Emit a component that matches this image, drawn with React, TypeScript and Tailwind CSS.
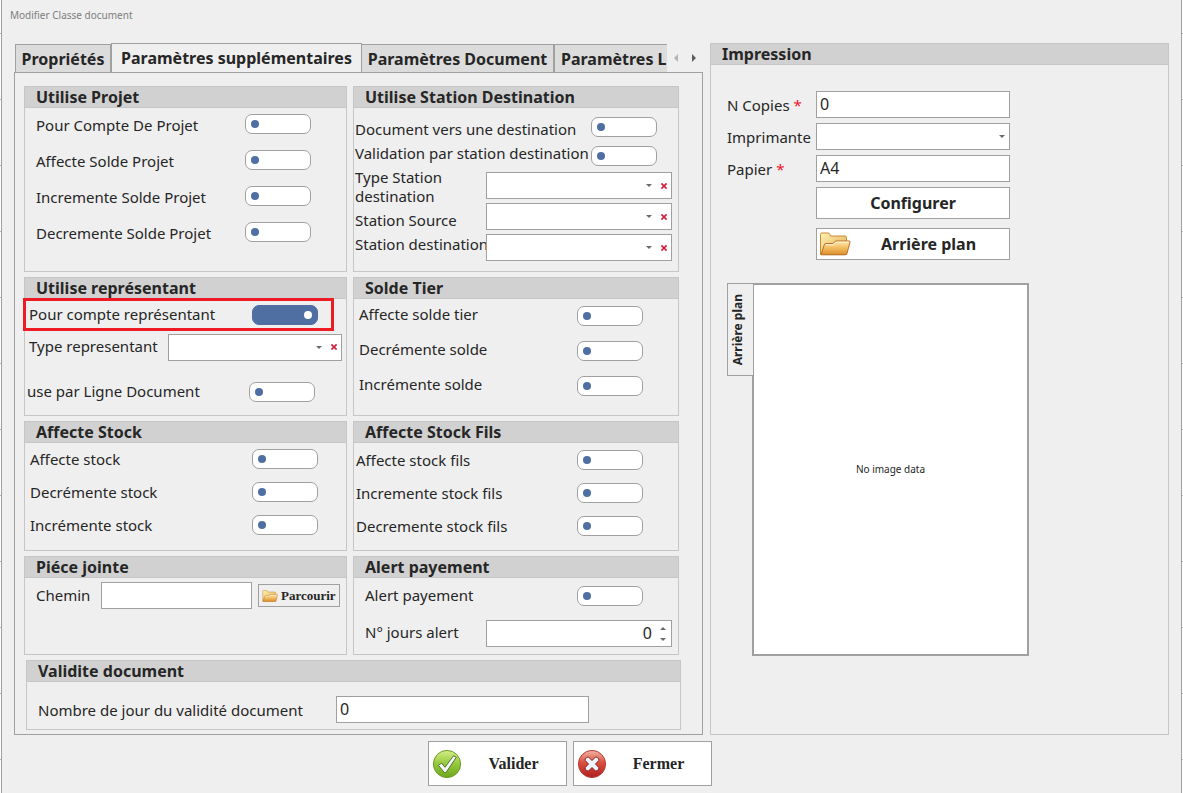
import React from "react";

const cx = (...parts: (string | undefined | false)[]) => parts.filter(Boolean).join(" ");

function Toggle({ id, on }: { id: string; on?: boolean }) {
  return (
    <input
      id={id}
      type="checkbox"
      role="switch"
      defaultChecked={on}
      className="flex h-5 w-[66px] shrink-0 appearance-none items-center rounded-[7px] border border-[#a0a0a0] bg-white px-[5px] before:block before:h-2 before:w-2 before:rounded-full before:bg-[#4f6fa3] checked:justify-end checked:border-[#4f6fa3] checked:bg-[#4f6fa3] checked:before:bg-white"
    />
  );
}

function Caret({ up }: { up?: boolean }) {
  return (
    <svg viewBox="0 0 6 3" className="block h-[3px] w-1.5 shrink-0" fill="#6a6a6a" aria-hidden="true">
      <path d={up ? "M0 3 3 0 6 3Z" : "M0 0H6L3 3Z"} />
    </svg>
  );
}

function Combo({ id, clearable = true, className }: { id: string; clearable?: boolean; className?: string }) {
  return (
    <div className={cx("flex h-[27px] items-center border border-[#a0a0a0] bg-white", className)}>
      <select id={id} defaultValue="" className="h-full min-w-0 flex-1 appearance-none bg-transparent px-1 outline-none">
        <option value=""></option>
      </select>
      <span className={clearable ? "mr-[9px]" : "mr-1"}>
        <Caret />
      </span>
      {clearable && (
        <button type="button" aria-label="Effacer" className="mr-1 block">
          <svg viewBox="0 0 6 6" className="block h-1.5 w-1.5" stroke="#d4213d" strokeWidth="1.7" aria-hidden="true">
            <path d="M.4.4 5.6 5.6M5.6.4.4 5.6" />
          </svg>
        </button>
      )}
    </div>
  );
}

function Group({ title, className, bodyClass, children }: { title: string; className?: string; bodyClass?: string; children: React.ReactNode }) {
  return (
    <section className={cx("relative flex flex-col border border-[#c6c6c6]", className)}>
      <h2 className="h-[21px] border-b border-[#c6c6c6] bg-[#d1d1d1] pl-[11px] text-base leading-5 font-bold">{title}</h2>
      <div className={bodyClass}>{children}</div>
    </section>
  );
}

function Row({ id, label, on, className, labelClass }: { id: string; label: string; on?: boolean; className: string; labelClass?: string }) {
  return (
    <div className={cx("flex items-center justify-between", className)}>
      <label htmlFor={id} className={cx("leading-5 whitespace-nowrap", labelClass)}>
        {label}
      </label>
      <Toggle id={id} on={on} />
    </div>
  );
}

function Folder({ className }: { className: string }) {
  return (
    <svg viewBox="0 0 32 24" className={className} aria-hidden="true">
      <defs>
        <linearGradient id="folder-back" x1="0" y1="0" x2="1" y2="1">
          <stop offset="0" stopColor="#fff3b4" />
          <stop offset="1" stopColor="#e0a64a" />
        </linearGradient>
        <linearGradient id="folder-front" x1="0" y1="0" x2="0" y2="1">
          <stop offset="0" stopColor="#fde9b0" />
          <stop offset=".5" stopColor="#f2bc62" />
          <stop offset="1" stopColor="#dd8f2c" />
        </linearGradient>
      </defs>
      <path d="M1.5 22.5V2.5Q1.5 1 3 1H9Q10.200 1 10.800 2.200L11.500 4H26Q27.500 4 27.500 5.500V22.500Z" fill="url(#folder-back)" stroke="#c98a35" />
      <path d="M2 22.800 5.200 13Q5.700 11.500 7.200 11.500H14L16.500 9H30.200Q31.300 9 31 10.200L28 21.300Q27.600 22.800 26 22.800Z" fill="url(#folder-front)" stroke="#b9702a" />
      <path d="M6.500 12.800H14.500L17 10.200H29.500" fill="none" stroke="#fff7d8" />
    </svg>
  );
}

function CheckIcon() {
  return (
    <svg viewBox="0 0 30 30" className="h-[30px] w-[30px] shrink-0" aria-hidden="true">
      <defs>
        <linearGradient id="ok" x1="0" y1="0" x2="0" y2="1">
          <stop offset="0" stopColor="#d4ee86" />
          <stop offset=".5" stopColor="#94c83c" />
          <stop offset="1" stopColor="#6fa51f" />
        </linearGradient>
      </defs>
      <circle cx="15" cy="15" r="13.600" fill="url(#ok)" stroke="#6c9b2a" />
      <path d="M6.500 16.500 9.500 14 13 18.300 21.500 6.800 24.300 8.300 14 23.500H12.300Z" fill="#f2f6fb" stroke="#54752a" strokeLinejoin="round" />
    </svg>
  );
}

function CloseIcon() {
  return (
    <svg viewBox="0 0 30 30" className="h-[30px] w-[30px] shrink-0" aria-hidden="true">
      <defs>
        <linearGradient id="ko" x1="0" y1="0" x2="0" y2="1">
          <stop offset="0" stopColor="#f0b6a4" />
          <stop offset=".45" stopColor="#d9503f" />
          <stop offset="1" stopColor="#b01f1c" />
        </linearGradient>
      </defs>
      <circle cx="15" cy="15" r="13.600" fill="url(#ko)" stroke="#b5403a" />
      <path
        d="M11.500 8 15 11.500 18.500 8 20 8.200 21.800 10 21.800 11.500 18.500 15 21.800 18.500 21.800 20 20 21.800 18.500 22 15 18.500 11.500 22 10 21.800 8.200 20 8.200 18.500 11.500 15 8.200 11.500 8.200 10 10 8.200Z"
        fill="#eef3fa"
        stroke="#8a1f1f"
        strokeLinejoin="round"
      />
    </svg>
  );
}

const fieldClass = "h-[27px] min-w-0 border border-[#a0a0a0] bg-white px-[3px] pb-px text-base leading-5 outline-none";
const tabClass = "h-[28px] shrink-0 border border-b-0 border-[#a0a0a0] bg-[#dcdcdc] text-base font-bold whitespace-nowrap";

function Edge() {
  return (
    <div className="flex w-px flex-col justify-around bg-white" aria-hidden="true">
      {Array.from({ length: 12 }, (_, i) => (
        <span key={i} className="h-px bg-[#b4b4b4]" />
      ))}
    </div>
  );
}

export default function App() {
  return (
    <div className="flex min-h-screen bg-white font-['Noto_Sans',sans-serif] text-[15px] text-[#262626]">
      <Edge />
      <main className="flex min-w-0 flex-1 flex-col border-x border-[#a0a0a0] bg-[#efefef] px-3">
        <h1 className="-ml-1 pt-[7px] text-[10px] leading-4 text-[#7d7d7d]">Modifier Classe document</h1>

        <div className="flex gap-[7px] pt-5">
          <div className="flex min-w-0 flex-[689] flex-col">
            <div role="tablist" className="flex items-end">
              <div className="flex min-w-0 flex-1 items-end overflow-hidden pl-px">
                <button type="button" role="tab" aria-selected="false" className={cx(tabClass, "w-24")}>Propriétés</button>
                <button type="button" role="tab" aria-selected="true" className="relative z-10 -mb-px h-[30px] w-[251px] shrink-0 border border-b-0 border-[#a0a0a0] bg-[#efefef] pb-px text-base font-bold whitespace-nowrap">
                  Paramètres supplémentaires
                </button>
                <button type="button" role="tab" aria-selected="false" className={cx(tabClass, "w-[192px] border-l-0")}>Paramètres Document</button>
                <button type="button" role="tab" aria-selected="false" className="h-[28px] min-w-0 flex-1 border border-r-0 border-b-0 border-[#a0a0a0] bg-[#dcdcdc] pl-1.5 text-left text-base font-bold whitespace-nowrap">Paramètres L</button>
              </div>
              <div className="flex h-[29px] w-9 shrink-0 items-center gap-3.5 pl-[7px]">
                <button type="button" aria-label="Onglets précédents">
                  <svg viewBox="0 0 4 8" className="block h-2 w-1" fill="#b4b4b4"><path d="M4 0V8L0 4Z" /></svg>
                </button>
                <button type="button" aria-label="Onglets suivants">
                  <svg viewBox="0 0 4 8" className="block h-2 w-1" fill="#5c5c5c"><path d="M0 0V8L4 4Z" /></svg>
                </button>
              </div>
            </div>

            <div className="grid flex-1 grid-cols-[minmax(0,323fr)_minmax(0,326fr)] content-start gap-x-1.5 gap-y-[5px] border border-[#a0a0a0] pt-[13px] pr-[23px] pb-1 pl-[9px]">
              <Group title="Utilise Projet" className="min-h-[186px]">
                {[
                  ["p1", "Pour Compte De Projet"],
                  ["p2", "Affecte Solde Projet"],
                  ["p3", "Incremente Solde Projet"],
                  ["p4", "Decremente Solde Projet"],
                ].map(([id, label]) => (
                  <Row key={id} id={id} label={label} className="h-9 pr-[35px] pb-1 pl-[11px]" labelClass="pt-0.5" />
                ))}
              </Group>

              <Group title="Utilise Station Destination" bodyClass="flex justify-between pr-1.5 pl-px">
                <div className="flex w-[131px] shrink-0 flex-col gap-[5px] pt-3 leading-[19px] whitespace-nowrap">
                  <label htmlFor="s1">Document vers une destination</label>
                  <label htmlFor="s2">Validation par station destination</label>
                  <label htmlFor="s3">Type Station<br />destination</label>
                  <label htmlFor="s4">Station Source</label>
                  <label htmlFor="s5">Station destination</label>
                </div>
                <div className="flex min-w-0 flex-1 flex-col gap-1 pt-[9px]">
                  <div className="flex flex-col items-end gap-[9px] pr-[15px] pb-0.5">
                    <Toggle id="s1" />
                    <Toggle id="s2" />
                  </div>
                  <Combo id="s3" />
                  <Combo id="s4" />
                  <Combo id="s5" />
                </div>
              </Group>

              <Group title="Utilise représentant" className="min-h-[139px]">
                <Row id="r1" label="Pour compte représentant" on className="h-8 pr-7 pl-1" labelClass="pb-0.5" />
                <div className="flex h-8 items-center justify-between pr-1 pl-1">
                  <label htmlFor="r2" className="pb-0.5 leading-5">Type representant</label>
                  <Combo id="r2" className="w-[174px]" />
                </div>
                <Row id="r3" label="use par Ligne Document" className="mt-[15px] h-7 pr-[31px] pl-0.5" labelClass="pb-0.5" />
                <div className="pointer-events-none absolute top-5 -left-0.5 h-[33px] w-[311px] border-3 border-[#ed1c24]" />
              </Group>

              <Group title="Solde Tier">
                {[
                  ["t1", "Affecte solde tier"],
                  ["t2", "Decrémente solde"],
                  ["t3", "Incrémente solde"],
                ].map(([id, label]) => (
                  <Row key={id} id={id} label={label} className="h-[35px] pr-[35px] pb-px pl-[5px]" labelClass="pb-1" />
                ))}
              </Group>

              <Group title="Affecte Stock" className="min-h-[130px]">
                {[
                  ["a1", "Affecte stock"],
                  ["a2", "Decrémente stock"],
                  ["a3", "Incrémente stock"],
                ].map(([id, label]) => (
                  <Row key={id} id={id} label={label} className="h-[33px] pr-7 pb-px pl-[5px]" />
                ))}
              </Group>

              <Group title="Affecte Stock Fils" bodyClass="pt-px">
                {[
                  ["f1", "Affecte stock fils"],
                  ["f2", "Incremente stock fils"],
                  ["f3", "Decremente stock fils"],
                ].map(([id, label]) => (
                  <Row key={id} id={id} label={label} className="h-[33px] pr-[35px] pb-px pl-0.5" />
                ))}
              </Group>

              <Group title="Piéce jointe" className="min-h-[99px]" bodyClass="flex items-center pt-1 pr-1.5 pl-[11px]">
                <label htmlFor="j1" className="w-[65px] shrink-0 pb-0.5 leading-5">Chemin</label>
                <input id="j1" type="text" className={cx(fieldClass, "flex-1")} />
                <button type="button" className="ml-1.5 flex h-[23px] w-[82px] items-center gap-[3px] border border-[#a0a0a0] pl-[3px] font-['Liberation_Serif',serif] text-[13px] leading-4 font-bold">
                  <Folder className="h-3 w-4 shrink-0" />
                  Parcourir
                </button>
              </Group>

              <Group title="Alert payement">
                <Row id="y1" label="Alert payement" className="h-9 pr-[35px] pl-[11px]" labelClass="pb-0.5" />
                <div className="flex items-center justify-between pt-1.5 pr-1.5 pl-[11px]">
                  <label htmlFor="y2" className="pb-1 leading-5 whitespace-nowrap">N° jours alert</label>
                  <div className="flex h-[27px] w-[186px] items-center border border-[#a0a0a0] bg-white pr-[5px]">
                    <input id="y2" type="text" inputMode="numeric" defaultValue="0" className="h-full min-w-0 flex-1 bg-transparent pr-2 pb-px text-right text-base outline-none" />
                    <span className="flex flex-col gap-2"><Caret up /><Caret /></span>
                  </div>
                </div>
              </Group>

              <Group title="Validite document" className="col-span-2 -mr-0.5 ml-0.5 min-h-[70px]" bodyClass="flex items-center pt-3.5 pl-[11px]">
                <label htmlFor="v1" className="w-[298px] shrink-0 leading-5">Nombre de jour du validité document</label>
                <input id="v1" type="text" defaultValue="0" className={cx(fieldClass, "w-[253px]")} />
              </Group>
            </div>
          </div>

          <Group title="Impression" className="min-w-0 flex-[457]" bodyClass="flex flex-col gap-[23px] pt-[26px] pl-4">
            <div className="grid grid-cols-[89px_194px] items-center gap-y-[5px]">
              <label htmlFor="i1" className="leading-5">N Copies <span className="text-[#f0142d]">*</span></label>
              <input id="i1" type="text" defaultValue="0" className={fieldClass} />
              <label htmlFor="i2" className="leading-5">Imprimante</label>
              <Combo id="i2" clearable={false} />
              <label htmlFor="i3" className="leading-5">Papier <span className="text-[#f0142d]">*</span></label>
              <input id="i3" type="text" defaultValue="A4" className={fieldClass} />
              <button type="button" className="col-start-2 h-8 border border-[#a0a0a0] bg-white text-base font-bold">Configurer</button>
              <button type="button" className="col-start-2 mt-1 flex h-8 items-center border border-[#a0a0a0] bg-white pr-[3px] pl-[2px] text-base font-bold">
                <Folder className="h-6 w-8 shrink-0" />
                <span className="flex-1">Arrière plan</span>
              </button>
            </div>
            <div className="flex items-start">
              <div role="tablist" className="relative z-10 -mr-px">
                <button type="button" role="tab" aria-selected="true" className="flex h-[93px] w-[26px] items-center justify-center border border-r-0 border-[#a0a0a0] bg-[#efefef] pr-1.5">
                  <span className="rotate-180 text-xs leading-5 font-bold whitespace-nowrap [writing-mode:vertical-rl]">Arrière plan</span>
                </button>
              </div>
              <div className="flex h-[373px] w-[277px] items-center justify-center border-2 border-[#a0a0a0] bg-white text-[10px]">No image data</div>
            </div>
          </Group>
        </div>

        <div className="flex justify-center gap-1.5 pt-1.5 pr-[44px] pb-[7px] font-['Liberation_Serif',serif] text-base font-bold">
          <button type="button" className="flex h-[45px] w-[139px] items-center border border-[#a0a0a0] bg-white pl-[3px]">
            <CheckIcon />
            <span className="flex-1">Valider</span>
          </button>
          <button type="button" className="flex h-[45px] w-[139px] items-center border border-[#a0a0a0] bg-white pl-[3px]">
            <CloseIcon />
            <span className="flex-1">Fermer</span>
          </button>
        </div>
      </main>
      <Edge />
    </div>
  );
}
